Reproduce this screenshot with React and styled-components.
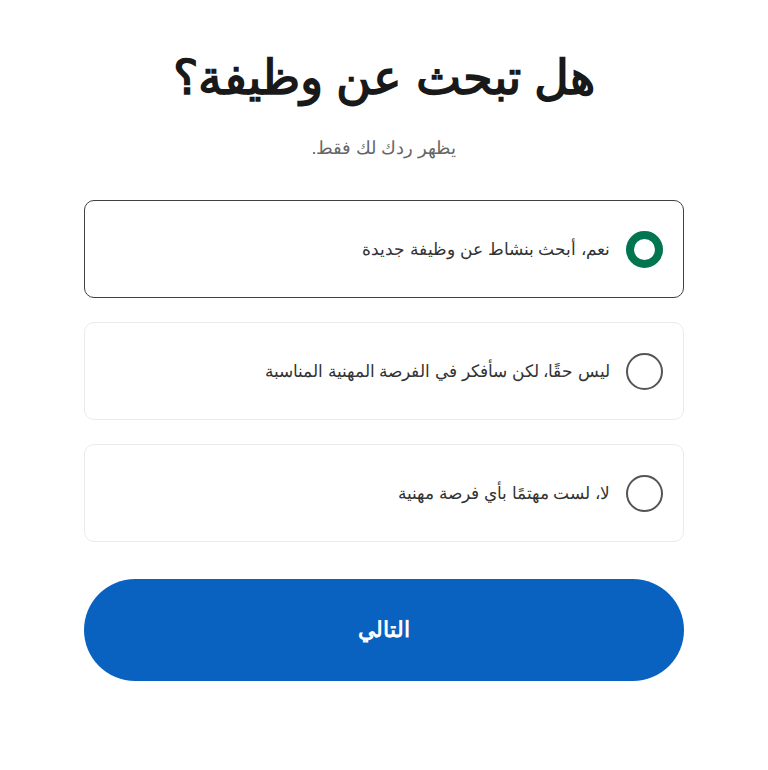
import styled, { createGlobalStyle } from "styled-components";

const GlobalStyle = createGlobalStyle`
  body {
    margin: 0;
    background: #fff;
    font-family: "Liberation Sans", Arial, sans-serif;
  }
`;

const options = [
  { id: "active", label: "نعم، أبحث بنشاط عن وظيفة جديدة" },
  { id: "open", label: "ليس حقًا، لكن سأفكر في الفرصة المهنية المناسبة" },
  { id: "no", label: "لا، لست مهتمًا بأي فرصة مهنية" },
];

const App = () => {
  const selected = "active";
  return (
    <>
      <GlobalStyle />
      <Page dir="rtl">
        <Title>هل تبحث عن وظيفة؟</Title>
        <Subtitle>يظهر ردك لك فقط.</Subtitle>
        <Options>
          {options.map(({ id, label }) => (
            <Option key={id} $active={selected === id}>
              <Radio $checked={selected === id} />
              <Label>{label}</Label>
            </Option>
          ))}
        </Options>
        <NextButton>التالي</NextButton>
      </Page>
    </>
  );
};

export default App;

const Page = styled.main`
  width: 600px;
  margin: 0 auto;
  padding-top: 48px;
  display: flex;
  flex-direction: column;
`;

const Title = styled.h1`
  margin: 0;
  text-align: center;
  font-size: 48px;
  font-weight: 700;
  line-height: 60px;
  color: #191919;
`;

const Subtitle = styled.p`
  margin: 28px 0 0;
  text-align: center;
  font-size: 18px;
  line-height: 24px;
  color: #666;
`;

const Options = styled.div`
  margin-top: 40px;
  display: flex;
  flex-direction: column;
  gap: 24px;
`;

const Option = styled.label`
  box-sizing: border-box;
  height: 98px;
  padding: 0 20px;
  display: flex;
  align-items: center;
  gap: 16px;
  border-radius: 10px;
  border: 1px solid ${({ $active }) => ($active ? "#404040" : "#ebebeb")};
  cursor: pointer;
`;

const Radio = styled.span`
  box-sizing: border-box;
  flex-shrink: 0;
  width: 37px;
  height: 37px;
  border-radius: 50%;
  border: ${({ $checked }) => ($checked ? "8px solid #01754f" : "2px solid #555")};
  background: #fff;
`;

const Label = styled.span`
  font-size: 17px;
  color: #333;
`;

const NextButton = styled.button`
  margin-top: 37px;
  height: 102px;
  border: none;
  border-radius: 51px;
  background: #0a62c0;
  color: #fff;
  font-family: inherit;
  font-size: 22px;
  font-weight: 700;
  cursor: pointer;
`;
